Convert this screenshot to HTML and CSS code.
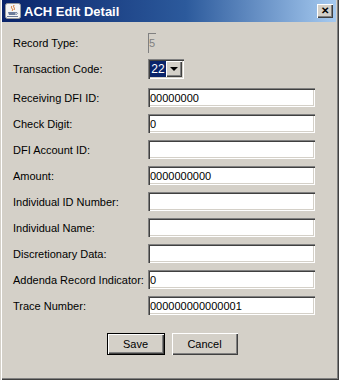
FILE: index.html
```html
<!DOCTYPE html>
<html lang="en">
<head>
    <meta charset="UTF-8">
    <title>ACH Edit Detail</title>
    <link rel="stylesheet" href="styles.css">
</head>
<body>
    <div class="window">
        <div class="titlebar">
            <span class="app-icon">
                <svg width="16" height="16" viewBox="0 0 16 16">
                    <rect x="0.5" y="0.5" width="15" height="15" rx="2" fill="#f4f4f4" stroke="#9a9a9a"/>
                    <path d="M7 3 C5 5 9 6 7 8 M9 2 C7.5 4 10.5 5 9 7" stroke="#d2691e" stroke-width="1" fill="none"/>
                    <path d="M3 9 L11 9 L10 12 L4 12 Z" fill="#6b7b9a"/>
                    <path d="M11 9.5 C13 9.5 13 11.5 10.5 11.5" stroke="#6b7b9a" fill="none"/>
                    <path d="M2 13.5 L13 13.5" stroke="#6b7b9a"/>
                </svg>
            </span>
            <span class="title">ACH Edit Detail</span>
            <span class="close-btn">&#x2715;</span>
        </div>

        <div class="form">
            <div class="row row-first">
                <label>Record Type:</label>
                <span class="readonly">5</span>
            </div>
            <div class="row row-combo">
                <label>Transaction Code:</label>
                <span class="combo">
                    <span class="combo-value">22</span>
                    <span class="combo-arrow"></span>
                </span>
            </div>
            <div class="row row-gap">
                <label>Receiving DFI ID:</label>
                <input type="text" value="00000000">
            </div>
            <div class="row">
                <label>Check Digit:</label>
                <input type="text" value="0">
            </div>
            <div class="row">
                <label>DFI Account ID:</label>
                <input type="text" value="">
            </div>
            <div class="row">
                <label>Amount:</label>
                <input type="text" value="0000000000">
            </div>
            <div class="row">
                <label>Individual ID Number:</label>
                <input type="text" value="">
            </div>
            <div class="row">
                <label>Individual Name:</label>
                <input type="text" value="">
            </div>
            <div class="row">
                <label>Discretionary Data:</label>
                <input type="text" value="">
            </div>
            <div class="row">
                <label>Addenda Record Indicator:</label>
                <input type="text" value="0">
            </div>
            <div class="row">
                <label>Trace Number:</label>
                <input type="text" value="000000000000001">
            </div>
        </div>

        <div class="buttons">
            <button class="btn btn-default">Save</button>
            <button class="btn btn-cancel">Cancel</button>
        </div>
    </div>
</body>
</html>
```

FILE: styles.css
```css
body {
    margin: 0;
    font-family: "Liberation Sans", Arial, sans-serif;
    font-size: 11px;
    background: #d4d0c8;
}
.window {
    width: 339px;
    height: 380px;
    box-sizing: border-box;
    padding: 0 3px 3px 2px;
    background: #d4d0c8;
    box-shadow: inset 1px 0 #d4d0c8, inset 2px 0 #fff, inset -1px -1px #404040, inset -2px -2px #808080;
    display: flex;
    flex-direction: column;
}
.titlebar {
    height: 22px;
    display: flex;
    align-items: center;
    background: linear-gradient(to right, #0a246a, #2c5a9c 55%, #a6caf0);
    color: #fff;
    padding: 0 3px 0 3px;
}
.app-icon {
    width: 16px;
    height: 16px;
    display: flex;
}
.title {
    margin-left: 3px;
    font-weight: bold;
    font-size: 13px;
    flex: 1;
}
.close-btn {
    width: 16px;
    height: 14px;
    background: #d4d0c8;
    color: #000;
    font-size: 10px;
    font-weight: bold;
    line-height: 14px;
    text-align: center;
    box-shadow: inset 1px 1px #fff, inset -1px -1px #404040, inset -2px -2px #808080;
}
.form {
    padding: 11px 0 0 11px;
}
.row {
    display: flex;
    align-items: center;
    height: 19px;
    margin-top: 7px;
}
.row-first {
    height: 20px;
    margin-top: 0;
}
.row-combo {
    height: 20px;
    margin-top: 6px;
}
.row-gap {
    margin-top: 9px;
}
.row label {
    width: 135px;
    white-space: nowrap;
    color: #000;
}
.row input {
    width: 167px;
    height: 19px;
    box-sizing: border-box;
    margin: 0;
    padding: 0 2px;
    border: none;
    background: #fff;
    font-family: inherit;
    font-size: 11px;
    color: #000;
    box-shadow: inset 1px 1px #808080, inset 2px 2px #404040, inset -1px -1px #fff, inset -2px -2px #d4d0c8;
}
.readonly {
    height: 20px;
    width: 7px;
    padding-left: 1px;
    color: #808080;
    line-height: 20px;
    box-shadow: inset 1px 1px #808080;
}
.combo {
    display: flex;
    width: 36px;
    height: 20px;
    box-sizing: border-box;
    padding: 2px;
    background: #fff;
    box-shadow: inset 1px 1px #808080, inset 2px 2px #404040, inset -1px -1px #fff, inset -2px -2px #d4d0c8;
}
.combo-value {
    width: 16px;
    background: #0a246a;
    color: #fff;
    font-size: 12px;
    line-height: 16px;
    text-align: center;
}
.combo-arrow {
    flex: 1;
    background: #d4d0c8;
    position: relative;
    box-shadow: inset 1px 1px #fff, inset -1px -1px #404040, inset -2px -2px #808080;
}
.combo-arrow::after {
    content: "";
    position: absolute;
    left: 4px;
    top: 6px;
    border-left: 4px solid transparent;
    border-right: 4px solid transparent;
    border-top: 4px solid #000;
}
.buttons {
    display: flex;
    justify-content: center;
    gap: 7px;
    margin-top: 18px;
    padding-left: 6px;
}
.btn {
    height: 22px;
    margin: 0;
    padding: 0;
    border: none;
    background: #d4d0c8;
    font-family: inherit;
    font-size: 11px;
    color: #000;
    box-shadow: inset 1px 1px #fff, inset -1px -1px #404040, inset -2px -2px #808080;
}
.btn-default {
    width: 58px;
    box-shadow: inset 0 0 0 1px #000, inset 2px 2px #fff, inset -2px -2px #404040, inset -3px -3px #808080;
}
.btn-cancel {
    width: 66px;
}
```
